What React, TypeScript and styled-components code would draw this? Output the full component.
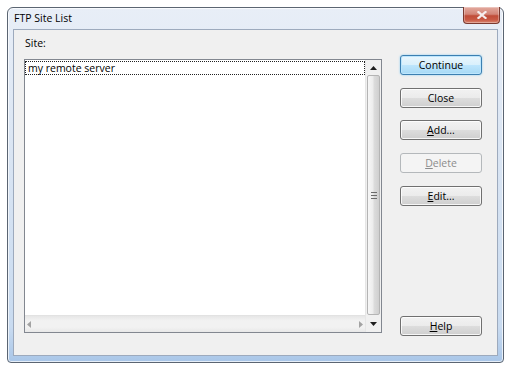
import React from "react";
import styled, { createGlobalStyle } from "styled-components";

const Global = createGlobalStyle`
  html, body { margin: 0; padding: 0; background: #ffffff; }
  body { font-family: "Open Sans", "Noto Sans", sans-serif; font-size: 10.5px; color: #000; }
  * { box-sizing: border-box; }
`;

const Page = styled.div`
  padding: 7px 0 0 7px;
  width: 513px;
  height: 372px;
`;

const Window = styled.div`
  width: 497px;
  height: 356px;
  border: 1px solid #5b6572;
  border-radius: 6px 6px 4px 4px;
  background: linear-gradient(to bottom, #e8eef7 0%, #dae5f3 40%, #c9dbf0 90%, #a9c6e8 100%);
  box-shadow: inset 0 0 0 1px rgba(255, 255, 255, 0.7);
  display: flex;
  flex-direction: column;
`;

const TitleBar = styled.div`
  height: 21px;
  display: flex;
  align-items: flex-start;
  justify-content: space-between;
  padding: 0 3px 0 6px;
`;

const Title = styled.div`
  line-height: 20px;
  font-size: 10.5px;
  color: #000;
`;

const CloseBtn = styled.div`
  width: 37px;
  height: 17px;
  margin-top: -1px;
  border: 1px solid #7a3a30;
  border-top: none;
  border-radius: 0 0 4px 4px;
  background: linear-gradient(to bottom, #e3aa9f 0%, #d38577 45%, #c04c38 55%, #c95a45 80%, #d98670 100%);
  box-shadow: inset 0 0 0 1px rgba(255, 255, 255, 0.3);
  display: flex;
  align-items: center;
  justify-content: center;
`;

const Client = styled.div`
  flex: 1;
  margin: 0 5px 6px 5px;
  border: 1px solid #9daabd;
  background: #f0f0f0;
  display: flex;
  padding: 0 15px 0 10px;
`;

const LeftCol = styled.div`
  width: 358px;
  display: flex;
  flex-direction: column;
  padding: 5px 0 22px 0;
`;

const Label = styled.div`
  line-height: 16px;
  height: 16px;
  padding-left: 1px;
  margin-bottom: 8px;
`;

const ListBox = styled.div`
  flex: 1;
  border: 1px solid #828790;
  background: #fff;
  display: grid;
  grid-template-columns: 1fr 16px;
  grid-template-rows: 1fr 17px;
`;

const Items = styled.div`
  grid-column: 1;
  grid-row: 1;
  padding-top: 1px;
`;

const Item = styled.div`
  height: 14px;
  line-height: 12px;
  border: 1px dotted #222;
  padding-left: 2px;
  white-space: nowrap;
`;

const VScroll = styled.div`
  grid-column: 2;
  grid-row: 1 / span 2;
  display: flex;
  flex-direction: column;
  background: #f0f0f0;
  border-left: 1px solid #e6e6e6;
`;

const ArrowCell = styled.div<{ $h?: number }>`
  height: ${(p) => p.$h ?? 15}px;
  display: flex;
  align-items: center;
  justify-content: center;
  flex-shrink: 0;
`;

const Thumb = styled.div`
  flex: 1;
  margin: 0 1px;
  border: 1px solid #b4b4b4;
  border-radius: 2px;
  background: linear-gradient(to right, #f7f7f7 0%, #ececec 45%, #dcdcdc 55%, #cfcfcf 100%);
  display: flex;
  align-items: center;
  justify-content: center;
`;

const HScroll = styled.div`
  grid-column: 1;
  grid-row: 2;
  display: flex;
  align-items: center;
  justify-content: space-between;
  background: linear-gradient(to bottom, #e6e6e6 0%, #f2f2f2 30%, #f2f2f2 70%, #e8e8e8 100%);
  border-top: 1px solid #e2e2e2;
  padding: 0 2px;
`;

const RightCol = styled.div`
  width: 82px;
  margin-left: 18px;
  display: flex;
  flex-direction: column;
  gap: 12.7px;
  padding: 25px 0 19px 0;
`;

const Button = styled.div<{ $variant?: "default" | "disabled" }>`
  height: 20px;
  border-radius: 3px;
  display: flex;
  align-items: center;
  justify-content: center;
  font-size: 10.5px;
  border: 1px solid
    ${(p) => (p.$variant === "default" ? "#3c7fb1" : p.$variant === "disabled" ? "#b4b8bb" : "#707070")};
  color: ${(p) => (p.$variant === "disabled" ? "#8c8c8c" : "#000")};
  background: ${(p) =>
    p.$variant === "default"
      ? "linear-gradient(to bottom, #eaf6fd 0%, #d9f0fc 50%, #bee6fd 50%, #a7d9f5 100%)"
      : p.$variant === "disabled"
      ? "#f4f4f4"
      : "linear-gradient(to bottom, #f2f2f2 0%, #ebebeb 50%, #dddddd 50%, #cfcfcf 100%)"};
  box-shadow: ${(p) =>
    p.$variant === "default"
      ? "inset 0 0 0 1px #bde6fd, 0 0 2px #7cc7ef"
      : p.$variant === "disabled"
      ? "none"
      : "inset 0 0 0 1px rgba(255,255,255,0.8)"};
  u { text-decoration: underline; text-underline-offset: 1px; }
`;

const HelpButton = styled(Button)`
  margin-top: auto;
`;

const Tri = ({ dir, color }: { dir: "up" | "down" | "left" | "right"; color: string }) => {
  const pts =
    dir === "up"
      ? "0,4 7,4 3.5,0"
      : dir === "down"
      ? "0,0 7,0 3.5,4"
      : dir === "left"
      ? "4,0 4,7 0,3.5"
      : "0,0 0,7 4,3.5";
  const w = dir === "up" || dir === "down" ? 7 : 4;
  const h = dir === "up" || dir === "down" ? 4 : 7;
  return (
    <svg width={w} height={h} viewBox={`0 0 ${w} ${h}`}>
      <polygon points={pts} fill={color} />
    </svg>
  );
};

const Grip = () => (
  <svg width="6" height="7" viewBox="0 0 6 7">
    <rect x="0" y="0" width="6" height="1" fill="#6b6b6b" />
    <rect x="0" y="3" width="6" height="1" fill="#6b6b6b" />
    <rect x="0" y="6" width="6" height="1" fill="#6b6b6b" />
  </svg>
);

const CloseX = () => (
  <svg width="10" height="8" viewBox="0 0 10 8">
    <path d="M1.5 1 L8.5 7 M8.5 1 L1.5 7" stroke="#f6eeee" strokeWidth="2.2" strokeLinecap="square" />
  </svg>
);

export default function App() {
  return (
    <Page>
      <Global />
      <Window>
        <TitleBar>
          <Title>FTP Site List</Title>
          <CloseBtn>
            <CloseX />
          </CloseBtn>
        </TitleBar>
        <Client>
          <LeftCol>
            <Label>Site:</Label>
            <ListBox>
              <Items>
                <Item>my remote server</Item>
              </Items>
              <VScroll>
                <ArrowCell>
                  <Tri dir="up" color="#1e1e1e" />
                </ArrowCell>
                <Thumb>
                  <Grip />
                </Thumb>
                <ArrowCell $h={17}>
                  <Tri dir="down" color="#1e1e1e" />
                </ArrowCell>
              </VScroll>
              <HScroll>
                <Tri dir="left" color="#a3a3a3" />
                <Tri dir="right" color="#a3a3a3" />
              </HScroll>
            </ListBox>
          </LeftCol>
          <RightCol>
            <Button $variant="default">Continue</Button>
            <Button>Close</Button>
            <Button>
              <span>
                <u>A</u>dd...
              </span>
            </Button>
            <Button $variant="disabled">
              <span>
                <u>D</u>elete
              </span>
            </Button>
            <Button>
              <span>
                <u>E</u>dit...
              </span>
            </Button>
            <HelpButton>
              <span>
                <u>H</u>elp
              </span>
            </HelpButton>
          </RightCol>
        </Client>
      </Window>
    </Page>
  );
}
